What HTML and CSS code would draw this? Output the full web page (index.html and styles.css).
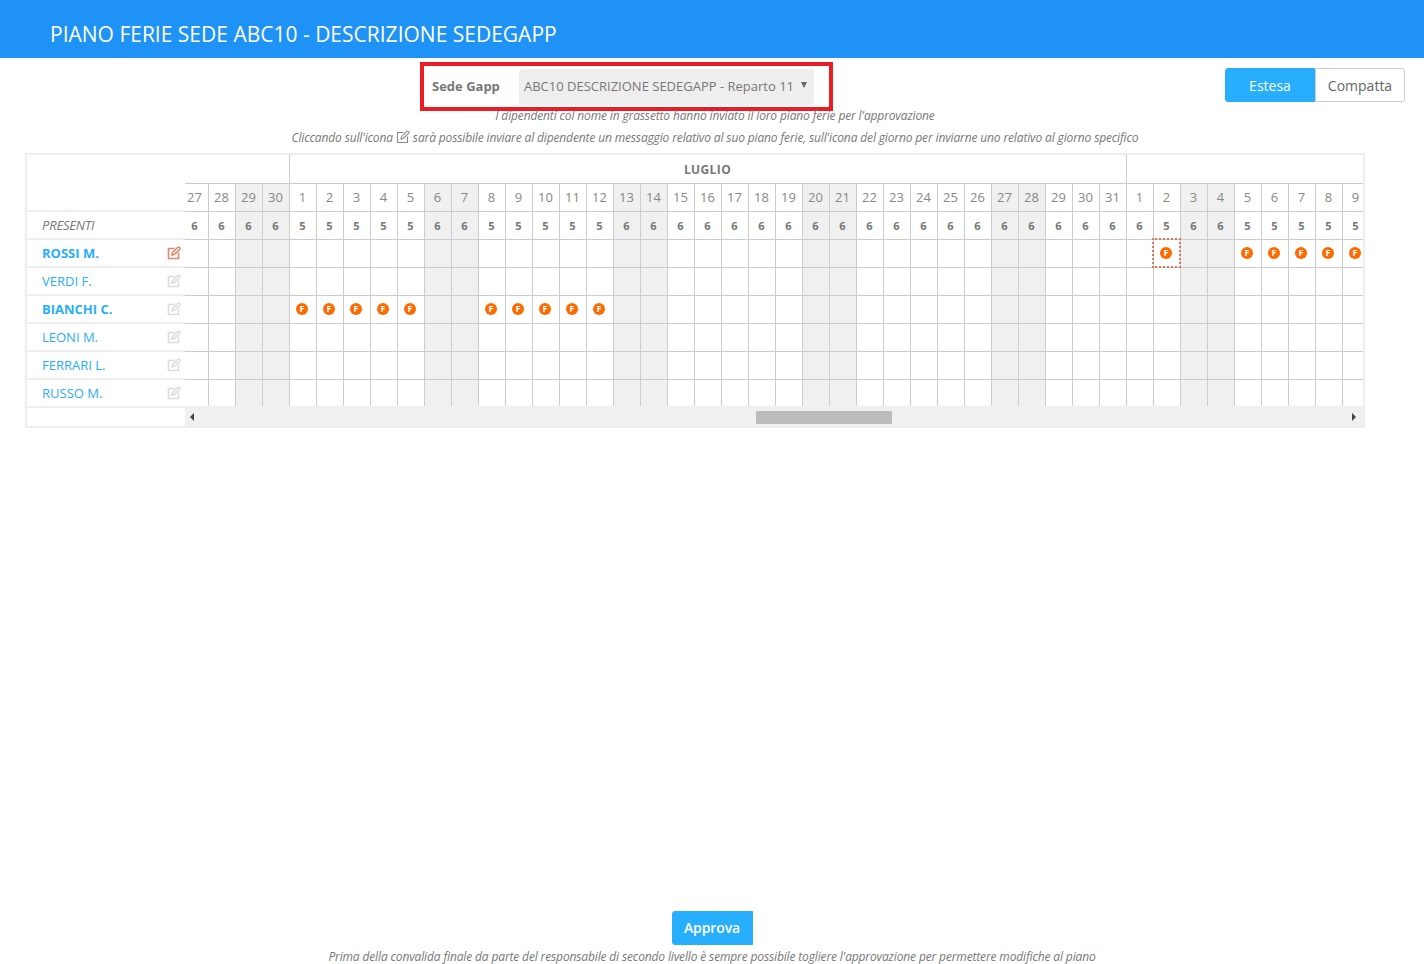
FILE: index.html
```html
<!DOCTYPE html>
<html>
<head>
<title>Piano ferie</title>
<meta charset="utf-8">
<link rel="stylesheet" href="styles.css">
</head>

<body>

<svg class="defs" xmlns="http://www.w3.org/2000/svg">
    <symbol id="ico-edit" viewBox="0 0 14 14">
        <path d="M7.5 2.5H1.5V12.5H11.5V6.5"/>
        <path d="M5 9L5.5 6.7L10.8 1.3Q11.5 .7 12.2 1.3L12.8 1.9Q13.3 2.5 12.7 3.2L7.3 8.5Z"/>
    </symbol>
</svg>

<div class="top"><h1>PIANO FERIE SEDE ABC10 - DESCRIZIONE SEDEGAPP</h1></div>

<div class="tools">
    <div class="sede">
        <label>Sede Gapp</label>
        <div class="combo"><span>ABC10 DESCRIZIONE SEDEGAPP - Reparto 11</span><i class="caret"></i></div>
    </div>
    <div class="switch">
        <button class="btn on">Estesa</button><button class="btn">Compatta</button>
    </div>
</div>

<p class="note">I dipendenti col nome in grassetto hanno inviato il loro piano ferie per l'approvazione</p>
<p class="note second">Cliccando sull'icona <svg class="ico-note"><use href="#ico-edit"/></svg> sarà possibile inviare al dipendente un messaggio relativo al suo piano ferie, sull'icona del giorno per inviarne uno relativo al giorno specifico</p>

<div class="plan">
    <div class="names" id="names"></div>
    <div class="side">
        <div class="viewport"><div class="days" id="days"></div></div>
        <div class="hbar">
            <i class="arrow prev"></i>
            <i class="thumb"></i>
            <i class="arrow next"></i>
        </div>
    </div>
</div>

<div class="bottom">
    <button class="btn on approve">Approva</button>
    <p class="note">Prima della convalida finale da parte del responsabile di secondo livello è sempre possibile togliere l'approvazione per permettere modifiche al piano</p>
</div>

<script src="plan.js"></script>
</body>
</html>
```

FILE: styles.css
```css
*{margin:0;padding:0;box-sizing:border-box;font-family:"Open Sans",sans-serif;}
html,body{height:964px;overflow:hidden;background:#fff;}
body{display:flex;flex-direction:column;}
.defs{width:0;height:0;position:absolute;}

.top{height:58px;background:#1e93f5;padding:21px 0 0 50px;}
.top h1{font-size:21px;line-height:27px;font-weight:400;color:#fff;letter-spacing:0;}

.tools{display:flex;align-items:flex-start;padding:4px 19px 0 420px;height:50px;}
.sede{width:413px;height:49px;border:4px solid #ed1c24;display:flex;align-items:center;padding-left:8px;}
.sede label{width:87px;font-size:13px;font-weight:700;color:#777;padding-bottom:2px;}
.combo{width:295px;height:36px;background:#eee;border-radius:4px;display:flex;align-items:center;padding:0 7px 2px 5px;font-size:13px;color:#777;justify-content:space-between;}
.caret{width:0;height:0;border:3.5px solid transparent;border-top:6px solid #666;border-bottom:0;margin:-1px 0 0 0;}
.switch{margin-left:auto;margin-top:6px;display:flex;}
.btn{width:90px;height:34px;font-size:14px;color:#666;background:#fff;border:1px solid #ccc;border-radius:0 3px 3px 0;}
.btn.on{background:#27aefc;border-color:#27aefc;color:#fff;border-radius:3px 0 0 3px;}

.note{font-size:12px;line-height:16px;font-style:italic;font-weight:400;color:#777;text-align:center;letter-spacing:-.14px;padding-left:6px;}
.note.second{margin-top:6px;}
.ico-note{width:14px;height:14px;fill:none;stroke:#888;stroke-width:1.1;vertical-align:-2px;}

.plan{margin:7px 0 0 25px;width:1340px;height:275px;border:2px solid #eee;display:flex;}
.names{width:158px;flex:none;}
.names div{height:28px;border-bottom:2px solid #eee;display:flex;align-items:center;justify-content:space-between;padding:0 4px 0 15px;font-size:13px;color:#27aefc;}
.names .corner{height:57px;}
.names .presenti{color:#777;font-size:13px;font-style:italic;letter-spacing:-.2px;}
.names .sent{font-weight:700;}
.names svg{width:14px;height:14px;fill:none;stroke:#ddd;stroke-width:1.6;}
.names .hot svg{stroke:#e2886c;}

.side{flex:1;min-width:0;}
.viewport{overflow:hidden;height:251px;}
.days{display:grid;grid-template-columns:repeat(44,27px);grid-template-rows:29px;grid-auto-rows:28px;margin-left:-3px;width:1188px;}
.days>div{border-right:1px solid #ccc;border-bottom:1px solid #ccc;display:flex;align-items:center;justify-content:center;position:relative;padding-right:1px;}
.days .month{font-size:12px;font-weight:700;color:#777;letter-spacing:.4px;}
.days .num{font-size:13px;color:#888;padding-bottom:2px;}
.days .tot{font-size:11px;font-weight:700;color:#777;}
.days .off{background:#f0f0f0;}
.days .sel::after{content:"";position:absolute;left:-2px;top:-2px;right:-1px;bottom:-1px;border:2px dotted #dc7a58;}
.fer{width:12px;height:12px;margin:-1px 0 0 -1px;border-radius:50%;background:#ff6a00;color:#fff;font-size:9px;font-weight:700;line-height:12px;text-align:center;}

.hbar{height:20px;background:#f0f0f0;display:flex;align-items:center;padding:2px 7px 0 5px;}
.thumb{width:136px;height:13px;background:#bcbcbc;margin-left:562px;}
.arrow{width:0;height:0;border:4px solid transparent;}
.arrow.prev{border-right:4px solid #444;border-left:0;}
.arrow.next{border-left:4px solid #444;border-right:0;margin-left:auto;}

.bottom{margin-top:auto;text-align:center;height:53px;}
.approve{width:81px;padding-bottom:2px;border-radius:3px;font-size:14px;font-weight:600;letter-spacing:-.1px;display:block;margin:0 auto 4px;}
.bottom .note{padding-left:0;}
```

FILE: plan.js
```js
// giorni mostrati: 27 giugno - 9 agosto
var dates = [27,28,29,30];
for(var d = 1; d <= 31; d++){ dates.push(d); }
for(var e = 1; e <= 9; e++){ dates.push(e); }

var off = [2,3,9,10,16,17,23,24,30,31,37,38];

var people = [
    {name:'ROSSI M.', sent:true, hot:true, ferie:[36,39,40,41,42,43]},
    {name:'VERDI F.', ferie:[]},
    {name:'BIANCHI C.', sent:true, ferie:[4,5,6,7,8,11,12,13,14,15]},
    {name:'LEONI M.', ferie:[]},
    {name:'FERRARI L.', ferie:[]},
    {name:'RUSSO M.', ferie:[]}
];

function cls(i, base){
    return base + (off.indexOf(i) >= 0 ? ' off' : '');
}

// presenti = 6 meno chi è in ferie quel giorno
function presenti(i){
    var n = 6;
    for(var p = 0; p < people.length; p++){
        if(people[p].ferie.indexOf(i) >= 0){ n--; }
    }
    return n;
}

// colonna dei nomi
var left = '<div class="corner"></div><div class="presenti">PRESENTI</div>';
for(var p = 0; p < people.length; p++){
    var c = (people[p].sent ? 'sent ' : '') + (people[p].hot ? 'hot' : '');
    left += '<div class="' + c + '"><span>' + people[p].name + '</span><svg><use href="#ico-edit"/></svg></div>';
}
document.getElementById('names').innerHTML = left;

// griglia dei giorni
var str = '<div class="month" style="grid-column:span 4"></div>'
    + '<div class="month" style="grid-column:span 31">LUGLIO</div>'
    + '<div class="month" style="grid-column:span 9"></div>';
for(var i = 0; i < 44; i++){
    str += '<div class="' + cls(i, 'num') + '">' + dates[i] + '</div>';
}
for(var j = 0; j < 44; j++){
    str += '<div class="' + cls(j, 'tot') + '">' + presenti(j) + '</div>';
}
for(var r = 0; r < people.length; r++){
    for(var k = 0; k < 44; k++){
        var has = people[r].ferie.indexOf(k) >= 0;
        var sel = (r == 0 && k == 36) ? ' sel' : '';
        str += '<div class="' + cls(k, 'day') + sel + '">' + (has ? '<span class="fer">F</span>' : '') + '</div>';
    }
}
document.getElementById('days').innerHTML = str;
```
